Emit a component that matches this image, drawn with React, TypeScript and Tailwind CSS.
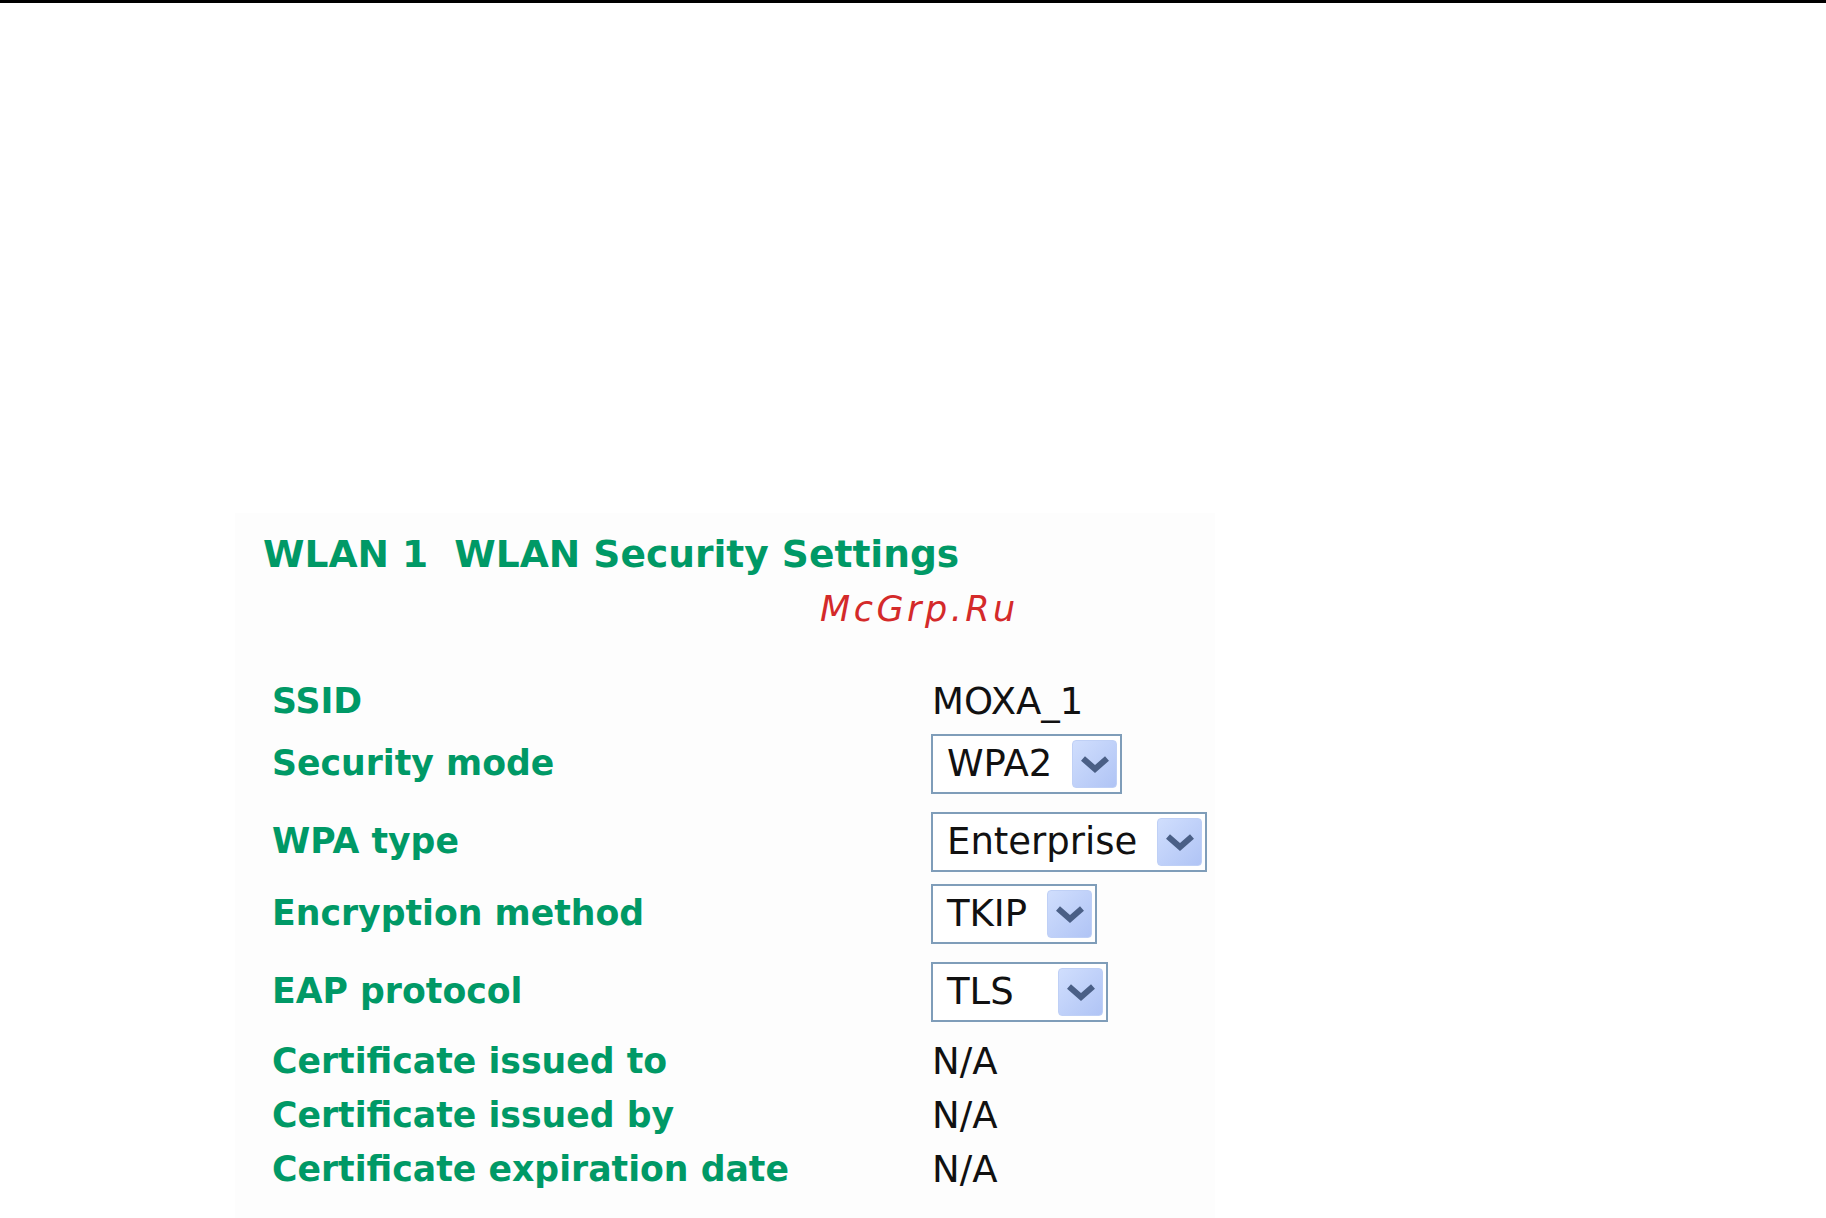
import React from 'react';

const labelFont = { fontFamily: '"DejaVu Sans", Verdana, sans-serif' };

function Chevron() {
  return (
    <svg width="30" height="18" viewBox="0 0 30 18" className="block">
      <path d="M3 3.5 L15 14 L27 3.5" fill="none" stroke="#4a5f86" strokeWidth="6" strokeLinejoin="miter" />
    </svg>
  );
}

function Select({ value, width }: { value: string; width: string }) {
  return (
    <div className={`flex h-[60px] ${width} items-center border-2 border-[#7f9db9] bg-white pl-[14px] pr-[3px]`}>
      <span className="text-[37px] leading-none text-[#111]">{value}</span>
      <div className="ml-auto flex h-[48px] w-[45px] items-center justify-center rounded-[4px] border border-[#bfd0f6] bg-gradient-to-br from-[#d0defd] to-[#b0c4f5]">
        <Chevron />
      </div>
    </div>
  );
}

type Row = { label: string; value?: string; select?: { value: string; width: string }; cls: string };

const rows: Row[] = [
  { label: 'SSID', value: 'MOXA_1', cls: 'h-[60px]' },
  { label: 'Security mode', select: { value: 'WPA2', width: 'w-[191px]' }, cls: 'h-[60px] mt-[2px]' },
  { label: 'WPA type', select: { value: 'Enterprise', width: 'w-[276px]' }, cls: 'h-[60px] mt-[18px]' },
  { label: 'Encryption method', select: { value: 'TKIP', width: 'w-[166px]' }, cls: 'h-[60px] mt-[12px]' },
  { label: 'EAP protocol', select: { value: 'TLS', width: 'w-[177px]' }, cls: 'h-[60px] mt-[18px]' },
  { label: 'Certificate issued to', value: 'N/A', cls: 'h-[54px] mt-[13px]' },
  { label: 'Certificate issued by', value: 'N/A', cls: 'h-[54px]' },
  { label: 'Certificate expiration date', value: 'N/A', cls: 'h-[54px]' },
];

export default function App() {
  return (
    <div className="h-[1218px] overflow-hidden border-t-[3px] border-black bg-white" style={labelFont}>
      <div className="flex h-full pt-[510px] pl-[235px]">
        <div className="w-[980px] bg-[#fdfdfd] pt-[23px]">
          {/* Heading */}
          <h1 className="whitespace-pre pl-[28px] text-[37.6px] font-bold leading-none text-[#009966]">
            {'WLAN 1  WLAN Security Settings'}
          </h1>

          {/* Watermark */}
          <div className="mt-[18px] pl-[585px] text-[35px] italic leading-none tracking-[3.5px] text-[#d42a2a]">
            McGrp.Ru
          </div>

          {/* Settings rows */}
          <div className="mt-[45px] pl-[37px]">
            {rows.map(row => (
              <div key={row.label} className={`flex items-center ${row.cls}`}>
                <div className="w-[659px] text-[34.7px] font-bold leading-none text-[#009966]">{row.label}</div>
                {row.select ? (
                  <Select value={row.select.value} width={row.select.width} />
                ) : (
                  <div className="pl-px text-[37px] leading-none text-[#111]">{row.value}</div>
                )}
              </div>
            ))}
          </div>
        </div>
      </div>
    </div>
  );
}
